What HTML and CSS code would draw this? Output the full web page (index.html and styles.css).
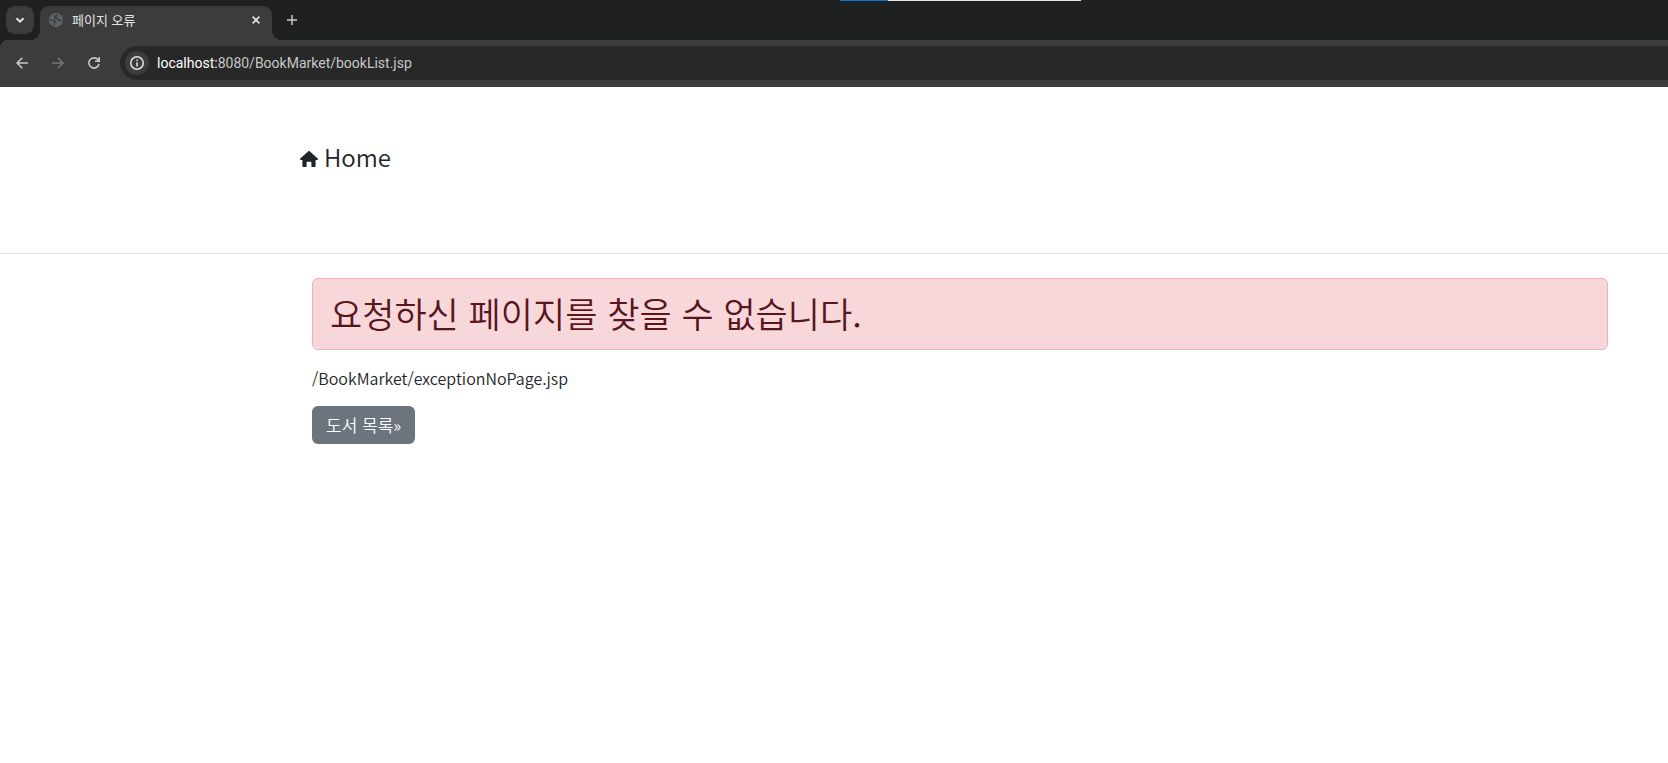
FILE: index.html
```html
<!DOCTYPE html>
<html lang="ko">
<head>
<meta charset="utf-8">
<title>페이지 오류</title>
<link rel="stylesheet" href="styles.css">
</head>
<body>
<div class="progress"><span class="progress-fill"></span></div>
<div class="tab-strip">
  <button class="tab-search" aria-label="탭 검색"><svg width="10" height="10" viewBox="0 0 10 10"><path d="M1.5 3.2 5 6.7 8.5 3.2" fill="none" stroke="currentColor" stroke-width="2"/></svg></button>
  <div class="tab">
    <svg class="globe" width="14" height="14" viewBox="0 0 14 14"><circle cx="7" cy="7" r="7" fill="#5f6368"/><path d="M1.2 7.2H4.4C6.3 7.2 6.8 8 6.8 9.4H5.2v2.9M8.4 1.5 7.6 3H5.8v2h2.4c.2 1.900 1 2.500 2.200 2.500h2.300" fill="none" stroke="#3c3c3c" stroke-width="1.4"/></svg>
    <span class="tab-title">페이지 오류</span>
    <button class="tab-close" aria-label="닫기"><svg width="8" height="8" viewBox="0 0 8 8"><path d="M.6.6l6.8 6.8M7.4.6.6 7.4" stroke="currentColor" stroke-width="1.6"/></svg></button>
  </div>
  <button class="new-tab" aria-label="새 탭"><svg width="10" height="10" viewBox="0 0 10 10"><path d="M5 0v10M0 5h10" stroke="currentColor" stroke-width="1.5"/></svg></button>
</div>
<div class="toolbar">
  <button class="nav" aria-label="뒤로"><svg width="12" height="12" viewBox="0 0 12 12"><path d="M12 6H1.2M6.3.8 1.1 6l5.2 5.2" fill="none" stroke="currentColor" stroke-width="1.6"/></svg></button>
  <button class="nav nav-off" aria-label="앞으로"><svg width="12" height="12" viewBox="0 0 12 12"><path d="M0 6h10.8M5.7.8 10.9 6l-5.2 5.2" fill="none" stroke="currentColor" stroke-width="1.6"/></svg></button>
  <button class="nav" aria-label="새로고침"><svg width="12" height="12" viewBox="0 0 12 12"><path d="M10.3 3.2A5.1 5.1 0 1 0 11 7M11.2 0v4.2H7" fill="none" stroke="currentColor" stroke-width="1.6"/></svg></button>
  <div class="address">
    <button class="site-info" aria-label="사이트 정보"><svg width="14" height="14" viewBox="0 0 14 14"><circle cx="7" cy="7" r="6.2" fill="none" stroke="currentColor" stroke-width="1.5"/><path d="M7 6.2v4.2M7 3.5v1.6" stroke="currentColor" stroke-width="1.5"/></svg></button>
    <span class="url"><span class="host">localhost:</span>8080/BookMarket/bookList.jsp</span>
  </div>
</div>
<header class="site-header">
  <a class="home" href="#"><svg width="18" height="16" viewBox="0 0 18 16" fill="currentColor"><path d="M8.300.3a1 1 0 0 1 1.400 0l8 7.200a.8.8 0 0 1-.6 1.400H15.600V15a1 1 0 0 1-1 1H11.400V11.600a.8.8 0 0 0-.8-.8H7.400a.8.8 0 0 0-.8.8V16H3.400a1 1 0 0 1-1-1V8.900H.9a.8.8 0 0 1-.6-1.400z"/></svg><span>Home</span></a>
</header>
<main class="content">
  <h2 class="alert">요청하신 페이지를 찾을 수 없습니다.</h2>
  <p class="path">/BookMarket/exceptionNoPage.jsp</p>
  <a class="button" href="#">도서 목록»</a>
</main>
</body>
</html>
```
FILE: styles.css
```css
* { box-sizing: border-box; }
body {
  margin: 0;
  background: #fff;
  color: #212529;
  font: 16px/24px "Noto Sans CJK KR", sans-serif;
}
button { border: 0; padding: 0; background: none; color: #e3e3e3; display: flex; align-items: center; justify-content: center; flex: none; }
.progress { position: absolute; top: 0; left: 840px; width: 241px; height: 1px; background: #e4e8e6; }
.progress-fill { display: block; width: 20%; height: 1px; background: #0078d7; }
.tab-strip { display: flex; height: 40px; padding: 6px 6px 0; background: #1f2120; }
.tab-search { width: 28px; height: 28px; border-radius: 9px; background: #3c3c3c; }
.tab {
  position: relative;
  display: flex;
  align-items: center;
  width: 232px;
  margin-left: 6px;
  padding: 0 12px 6px 9px;
  border-radius: 9px 9px 0 0;
  background: #3c3c3c;
}
.tab::before, .tab::after { content: ""; position: absolute; bottom: 0; width: 10px; height: 10px; }
.tab::before { right: 100%; background: radial-gradient(circle at 0 0, transparent 10px, #3c3c3c 10px); }
.tab::after { left: 100%; background: radial-gradient(circle at 100% 0, transparent 10px, #3c3c3c 10px); }
.tab-title { flex: 1; margin-left: 9px; color: #e3e3e3; font-size: 13px; line-height: 16px; }
.new-tab { width: 28px; height: 28px; margin-left: 6px; color: #c7c7c7; }
.toolbar { display: flex; align-items: center; height: 47px; padding: 5px 0 6px 4px; background: radial-gradient(circle at 8px 8px, #3c3c3c 8px, #1f2120 8px) 0 0 / 8px 8px no-repeat, #3c3c3c; }
.nav { width: 36px; height: 34px; color: #c7c7c7; }
.nav-off { color: #757575; }
.address { display: flex; flex: 1; align-items: center; height: 34px; margin-left: 8px; padding-left: 5px; border-radius: 17px 0 0 17px; background: #282828; }
.site-info { width: 24px; height: 24px; border-radius: 50%; background: #3c3c3c; }
.url { margin-left: 8px; color: #c7c7c7; font-family: Roboto, sans-serif; font-size: 14px; line-height: 20px; }
.host { color: #fff; }
.site-header { height: 167px; padding: 55px 48px 0 300px; border-bottom: 1px solid #dee2e6; }
.home { display: inline-flex; align-items: center; gap: 6px; color: #212529; font-size: 24px; font-weight: 350; line-height: 29px; text-decoration: none; }
.home svg { margin-top: 4px; }
.content { padding: 24px 60px 24px 312px; }
.alert { margin: 0 0 16px; padding: 15px 17px 17px; border: 1px solid #f1aeb5; border-radius: 6px; background: #f8d7da; color: #58151c; font-size: 35px; font-weight: 350; line-height: 38px; }
.path { margin: 0 0 16px; font-weight: 350; }
.button { display: inline-block; padding: 7px 14px; border-radius: 6px; background: #6c757d; color: #fff; font-size: 17px; font-weight: 350; text-decoration: none; }
```
